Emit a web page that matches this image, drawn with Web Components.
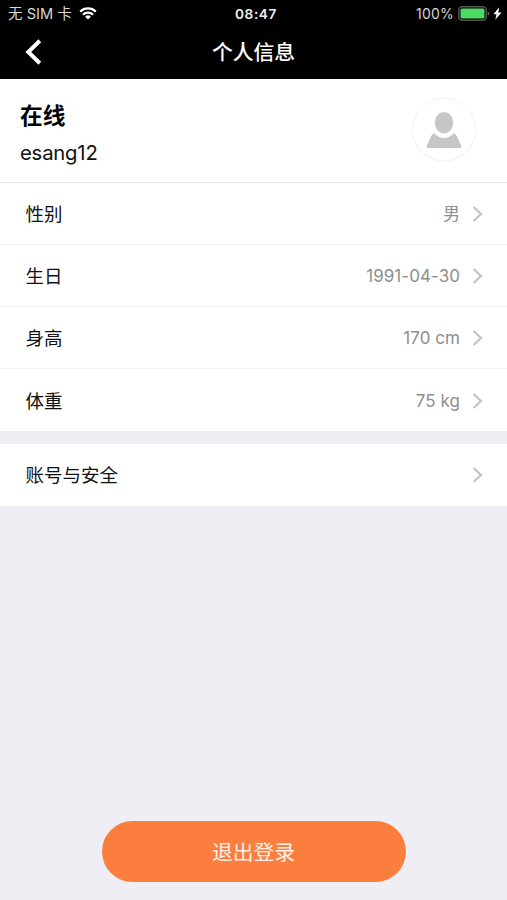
<!DOCTYPE html>
<html lang="zh-CN">
<head>
<meta charset="utf-8">
<meta name="viewport" content="width=device-width, initial-scale=1">
<title>个人信息</title>
<style>
  html, body {
    margin: 0;
    height: 100%;
  }
  body {
    --page-bg: #efeef5;
    --line-color: #f1f1f3;
    --accent: #fc7e3e;
    font-family: Inter, "Noto Sans CJK SC", sans-serif;
    color: #111;
    background: var(--page-bg);
    overflow: hidden;
  }
</style>
</head>
<body>
<profile-page>
  <status-bar slot="header" carrier="无 SIM 卡" time="08:47" battery="100%"></status-bar>
  <nav-bar slot="header">个人信息</nav-bar>
  <user-header status="在线" name="esang12"></user-header>
  <cell-group>
    <info-cell label="性别">男</info-cell>
    <info-cell label="生日">1991-04-30</info-cell>
    <info-cell label="身高">170 cm</info-cell>
    <info-cell label="体重">75 kg</info-cell>
  </cell-group>
  <cell-group>
    <info-cell label="账号与安全"></info-cell>
  </cell-group>
  <pill-button slot="footer">退出登录</pill-button>
</profile-page>

<script>
function createTemplate(html) {
  const template = document.createElement('template');
  template.innerHTML = html;
  return template;
}

class BaseElement extends HTMLElement {
  constructor() {
    super();
    this.attachShadow({ mode: 'open' });
    this.shadowRoot.appendChild(this.constructor.template.content.cloneNode(true));
  }

  setText(id, attribute) {
    this.shadowRoot.getElementById(id).textContent = this.getAttribute(attribute) || '';
  }
}

class ProfilePage extends BaseElement {
  static template = createTemplate(`
    <style>
      :host {
        display: flex;
        flex-direction: column;
        height: 900px;
        background: var(--page-bg);
      }
      header {
        height: 79px;
        background: #000;
        color: #fff;
      }
      main {
        flex: 1;
        display: flex;
        flex-direction: column;
      }
      footer {
        display: flex;
        justify-content: center;
        padding-bottom: 18.5px;
      }
    </style>
    <header><slot name="header"></slot></header>
    <main><slot></slot></main>
    <footer><slot name="footer"></slot></footer>
  `);
}

class StatusBar extends BaseElement {
  static template = createTemplate(`
    <style>
      :host {
        display: grid;
        grid-template-columns: 1fr auto 1fr;
        align-items: center;
        height: 27px;
        padding: 0 5px 0 8px;
        font-size: 14px;
        line-height: 27px;
        color: #d8d8d8;
        box-sizing: border-box;
      }
      .left, .right {
        display: flex;
        align-items: center;
      }
      .left { gap: 7px; }
      .right { justify-content: flex-end; }
      #carrier {
        padding-top: 2px;
        font-size: 14.6px;
        line-height: 25px;
      }
      #time {
        padding: 1px 0 0 2px;
        font-size: 13.6px;
        font-weight: 600;
        letter-spacing: 0.6px;
        line-height: 26px;
        color: #eee;
      }
      #battery { letter-spacing: 0.2px; }
      .battery { margin-left: 4px; }
      .bolt { margin-left: 3px; }
      svg { display: block; }
    </style>
    <div class="left">
      <span id="carrier"></span>
      <svg width="18" height="13" viewBox="0 0 18 13" fill="none" stroke="#fff" stroke-width="2.3">
        <path d="M1.2 4.6a11.2 11.2 0 0 1 15.6 0"/>
        <path d="M3.9 7.7a7.3 7.3 0 0 1 10.2 0"/>
        <path d="M9 12.6L6.1 9.8a4.1 4.1 0 0 1 5.8 0z" fill="#fff" stroke="none"/>
      </svg>
    </div>
    <span id="time"></span>
    <div class="right">
      <span id="battery"></span>
      <svg class="battery" width="32" height="15" viewBox="0 0 32 15">
        <rect x=".75" y=".75" width="27.5" height="13.5" rx="3.5" fill="none" stroke="#555" stroke-width="1.5"/>
        <rect x="2.5" y="2.5" width="24" height="10" rx="1.5" fill="#4cd964"/>
        <path d="M29.7 5.2a2.5 2.5 0 0 1 0 4.6z" fill="#666"/>
      </svg>
      <svg class="bolt" width="9" height="13" viewBox="0 0 9 13">
        <path d="M6.2.3L.4 7.3h3.1L2.3 12.700 8.500 5.500H5.300z" fill="#fff"/>
      </svg>
    </div>
  `);

  connectedCallback() {
    this.setText('carrier', 'carrier');
    this.setText('time', 'time');
    this.setText('battery', 'battery');
  }
}

class NavBar extends BaseElement {
  static template = createTemplate(`
    <style>
      :host {
        display: grid;
        grid-template-columns: 60px 1fr 60px;
        align-items: center;
        height: 52px;
        font-size: 20.8px;
        font-weight: 500;
        line-height: 52px;
        text-align: center;
      }
      svg {
        display: block;
        margin: 0 0 2px 24px;
      }
    </style>
    <svg width="18" height="26" viewBox="0 0 18 26" fill="none" stroke="#fff" stroke-width="4">
      <path d="M15.8 1.8L4.3 13l11.5 11.2"/>
    </svg>
    <span><slot></slot></span>
  `);
}

class UserHeader extends BaseElement {
  static template = createTemplate(`
    <style>
      :host {
        display: flex;
        justify-content: space-between;
        height: 104px;
        padding: 18px 31px 0 20px;
        border-bottom: 1px solid #e9e9eb;
        background: #fff;
        box-sizing: border-box;
      }
      #status {
        font-size: 22.7px;
        font-weight: 700;
        line-height: 37px;
        color: #000;
      }
      #name {
        font-size: 20.3px;
        letter-spacing: -0.2px;
        line-height: 37px;
      }
      svg { display: block; }
    </style>
    <div>
      <div id="status"></div>
      <div id="name"></div>
    </div>
    <svg width="64" height="65" viewBox="0 0 64 65">
      <circle cx="32" cy="32.5" r="31.5" fill="#fff" stroke="#f2f2f2"/>
      <g fill="#c6c6c6">
        <ellipse cx="32" cy="25.6" rx="9.2" ry="10.7"/>
        <path d="M22.5 36.2Q24 38.700 27 40q5 2 10 0 3-1.300 4.500-3.800 2.500.7 3.700 3.200l4.200 9.800q.8 1.800-1 1.800H15.600q-1.800 0-1-1.800l4.200-9.800q1.200-2.500 3.700-3.200z"/>
      </g>
    </svg>
  `);

  connectedCallback() {
    this.setText('status', 'status');
    this.setText('name', 'name');
  }
}

class CellGroup extends BaseElement {
  static template = createTemplate(`
    <style>
      :host {
        display: block;
        background: #fff;
      }
      :host(:not(:last-of-type)) {
        margin-bottom: 13px;
      }
      ::slotted(:not(:last-child)) {
        border-bottom: 1px solid var(--line-color);
      }
    </style>
    <slot></slot>
  `);
}

class InfoCell extends BaseElement {
  static template = createTemplate(`
    <style>
      :host {
        display: flex;
        align-items: center;
        height: 62px;
        padding: 1px 24px 0 25.5px;
        line-height: 60px;
        box-sizing: border-box;
      }
      :host(:only-child) {
        padding-top: 0;
      }
      #label {
        flex: 1;
        font-size: 18.5px;
      }
      .value {
        font-size: 17px;
        letter-spacing: 0.05px;
        color: #8e8e8e;
      }
      svg {
        display: block;
        margin-left: 12px;
      }
    </style>
    <span id="label"></span>
    <span class="value"><slot></slot></span>
    <svg width="11" height="16" viewBox="0 0 11 16" fill="none" stroke="#c4c4c6" stroke-width="2.2">
      <path d="M1.5 1L9 8l-7.500 7"/>
    </svg>
  `);

  connectedCallback() {
    this.setText('label', 'label');
  }
}

class PillButton extends BaseElement {
  static template = createTemplate(`
    <style>
      :host { display: block; }
      button {
        display: block;
        width: 304px;
        height: 61px;
        padding: 2px 0 0;
        border: 0;
        border-radius: 31px;
        background: var(--accent);
        color: #fff0e8;
        font: inherit;
        font-size: 20.8px;
        line-height: 59px;
      }
    </style>
    <button type="button"><slot></slot></button>
  `);
}

customElements.define('profile-page', ProfilePage);
customElements.define('status-bar', StatusBar);
customElements.define('nav-bar', NavBar);
customElements.define('user-header', UserHeader);
customElements.define('cell-group', CellGroup);
customElements.define('info-cell', InfoCell);
customElements.define('pill-button', PillButton);
</script>
</body>
</html>
